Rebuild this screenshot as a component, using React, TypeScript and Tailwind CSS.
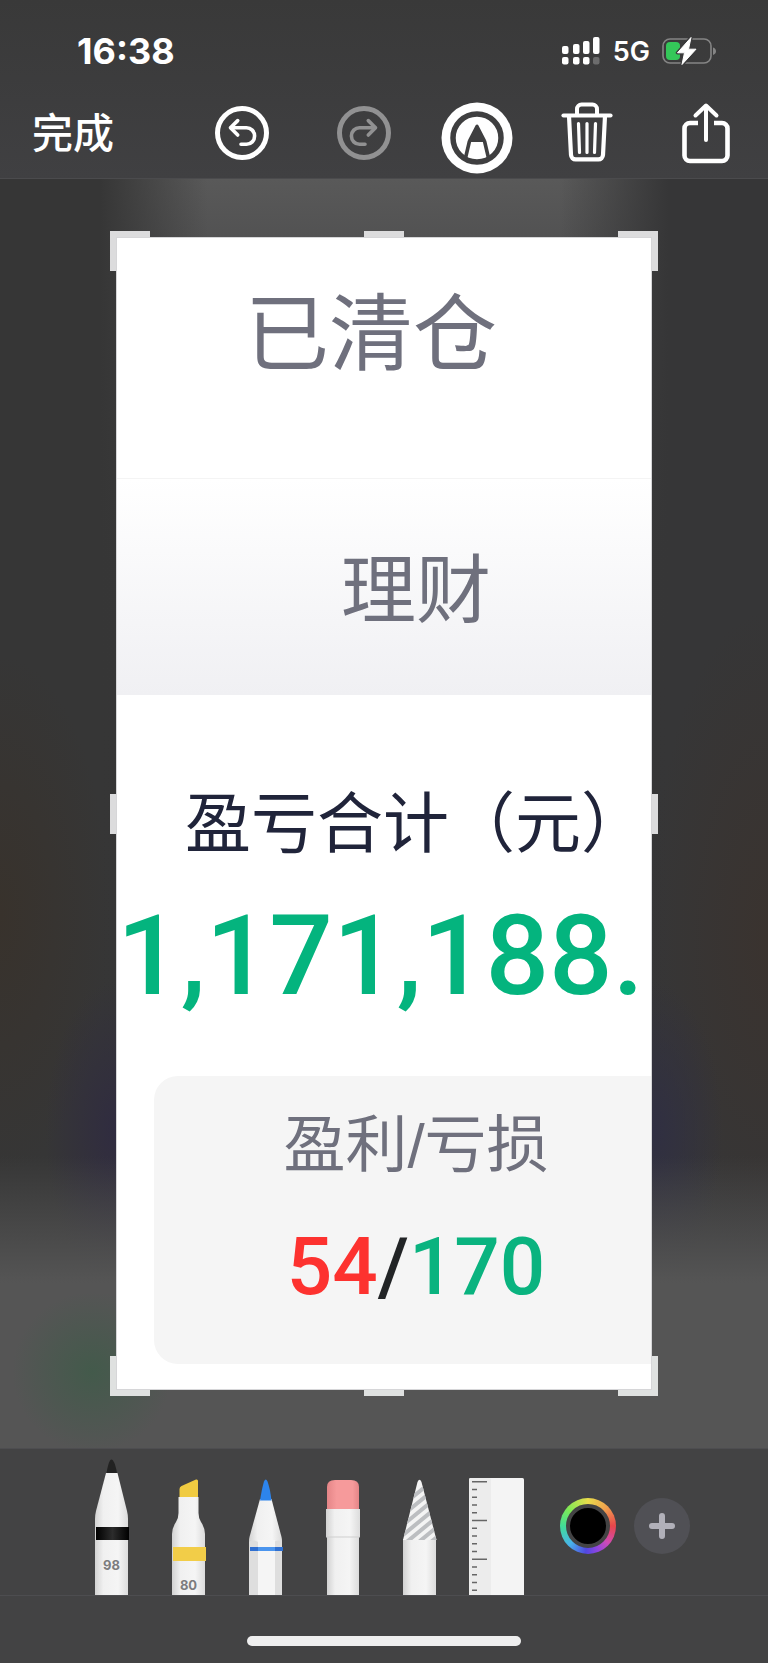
import React from 'react';

const bars = [
  { x: 0, y: 9, h: 8 },
  { x: 11, y: 7, h: 10 },
  { x: 21, y: 4, h: 13 },
  { x: 31, y: 0, h: 17 },
];

const SignalIcon = () => (
  <svg width="39" height="28" viewBox="0 0 39 28" fill="#fff">
    {bars.map((b, i) => (
      <g key={b.x}>
        <rect x={b.x} y={b.y} width="6.500" height={b.h} rx="2" />
        <rect x={b.x} y="20" width="6.500" height="7.500" rx="2" opacity={i === 3 ? 0.25 : 1} />
      </g>
    ))}
  </svg>
);

const BatteryIcon = () => (
  <svg width="55" height="28" viewBox="0 0 55 28">
    <rect x="1" y="2" width="48" height="24" rx="7" fill="none" stroke="#858585" strokeWidth="1.6" />
    <path d="M51 10.500v7.500c2-.6 3-2 3-3.700s-1-3.200-3-3.800z" fill="#858585" />
    <rect x="4" y="5" width="14" height="18" rx="4" fill="#34c759" />
    <path d="M29 .5 15.500 15.800h7L20 27.500 34 12.200h-7.500z" fill="#fff" stroke="#3b3b3c" strokeWidth="3.500" strokeLinejoin="round" />
    <path d="M29 .5 15.500 15.800h7L20 27.500 34 12.200h-7.500z" fill="#fff" stroke="#fff" strokeWidth="1" strokeLinejoin="round" />
  </svg>
);

const UndoIcon = ({ flipped = false }: { flipped?: boolean }) => (
  <svg width="54" height="54" viewBox="0 0 54 54" fill="none" stroke="currentColor" strokeLinecap="round" strokeLinejoin="round">
    <circle cx="27" cy="27" r="24.500" strokeWidth="5" />
    <g strokeWidth="3.600" transform={flipped ? 'matrix(-1 0 0 1 54 0)' : undefined}>
      <path d="M22.700 14.600 15.500 21.700l7.200 7.300" />
      <path d="M16 21.700h15.500a7.800 8 0 0 1 0 16.600H26" />
    </g>
  </svg>
);

const MarkupIcon = () => (
  <svg width="72" height="72" viewBox="0 0 72 72">
    <circle cx="36" cy="36" r="35.500" fill="#fff" />
    <circle cx="36" cy="36" r="24" fill="#fff" stroke="#3f3f40" strokeWidth="5.500" />
    <path d="M28.500 39 24.500 56M43.500 39 47.500 56" stroke="#3f3f40" strokeWidth="3.600" />
    <path d="M36 24 28.500 38.500h15z" fill="#3f3f40" stroke="#3f3f40" strokeWidth="3" strokeLinejoin="round" />
  </svg>
);

const TrashIcon = () => (
  <svg width="52" height="60" viewBox="0 0 52 60" fill="none" stroke="#fff" strokeLinecap="round" strokeLinejoin="round">
    <path d="M2.500 13.500h47" strokeWidth="4.200" />
    <path d="M16 13V7a4.500 4.500 0 0 1 4.500-4.500h11A4.500 4.500 0 0 1 36 7v6" strokeWidth="4" />
    <path d="m8 14 2 39a4.600 4.600 0 0 0 4.600 4.400h22.800A4.600 4.600 0 0 0 42 53l2-39" strokeWidth="4.200" />
    <path d="m17.500 21.500 1 29M26 21.500v29M34.500 21.500l-1 29" strokeWidth="3.200" />
  </svg>
);

const ShareIcon = () => (
  <svg width="50" height="62" viewBox="0 0 50 62" fill="none" stroke="#fff" strokeWidth="4.600" strokeLinejoin="round">
    <path d="M17 21H9a5.500 5.500 0 0 0-5.500 5.500v27A5.500 5.500 0 0 0 9 59h32a5.500 5.500 0 0 0 5.500-5.500v-27A5.500 5.500 0 0 0 41 21h-8" />
    <path d="M25 38V4M14.500 13.500 25 3.500l10.500 10" strokeWidth="4" strokeLinecap="round" />
  </svg>
);

const Shade = () => (
  <linearGradient id="shade" x1="0" x2="1" y1="0" y2="0">
    <stop offset="0" stopColor="#d2d2d2" />
    <stop offset="0.250" stopColor="#f0f0f0" />
    <stop offset="0.700" stopColor="#f5f5f5" />
    <stop offset="1" stopColor="#dcdcdc" />
  </linearGradient>
);

const PenTool = () => (
  <svg width="34" height="136" viewBox="0 0 34 136">
    <defs>
      <Shade />
      <linearGradient id="band" x1="0" x2="1" y1="0" y2="0">
        <stop offset="0" stopColor="#000" />
        <stop offset="0.500" stopColor="#2c2c2c" />
        <stop offset="1" stopColor="#000" />
      </linearGradient>
    </defs>
    <path d="M11 14h11.500L32 52q1 4 1 8v76H0V60q0-4 1-8z" fill="url(#shade)" />
    <path d="M11.500 14Q13 5 15 1.500 16.500-.6 18 1.500 20.500 5 22 14z" fill="#222" />
    <rect x="1" y="68" width="33" height="13" fill="url(#band)" />
    <text x="16.500" y="111" textAnchor="middle" className="fill-[#7c7c7e] font-['Inter'] text-[13px] font-bold">98</text>
  </svg>
);

const MarkerTool = () => (
  <svg width="34" height="116" viewBox="0 0 34 116">
    <path d="M7.500 19V10q0-2 2-3L24 .5q2-.5 2 1.500v17z" fill="#f0cb41" />
    <path d="M6.500 18H26.500V34q0 5 2.500 9 4 6 4 12v61H0V55q0-6 4-12 2.500-4 2.500-9z" fill="url(#shade)" />
    <rect x="1" y="68" width="33" height="14" fill="#f2cd48" />
    <text x="16.500" y="111" textAnchor="middle" className="fill-[#7c7c7e] font-['Inter'] text-[13px] font-bold">80</text>
  </svg>
);

const PencilTool = () => (
  <svg width="34" height="116" viewBox="0 0 34 116">
    <path d="M11 20h11.500L32.500 58q.5 2 .5 4v54H0V62q0-2 .5-4z" fill="url(#shade)" />
    <path d="M0 63q4-3 9 0h16q4-3 8 0v53H0z" fill="#dedede" />
    <path d="M9 61h17v55H9z" fill="#f5f5f5" />
    <path d="M11 21.500Q13 9 15 2.500q1.700-4 3.500 0Q21 9 22.500 21.500z" fill="#2d84ec" />
    <rect x="1" y="68" width="33" height="4" fill="#2f6fd0" />
    <rect x="9" y="68" width="17" height="4" fill="#4b95ee" />
  </svg>
);

const EraserTool = () => (
  <svg width="34" height="116" viewBox="0 0 34 116">
    <defs>
      <linearGradient id="rubber" x1="0" x2="1" y1="0" y2="0">
        <stop offset="0" stopColor="#e48587" />
        <stop offset="0.300" stopColor="#f69a9b" />
        <stop offset="0.800" stopColor="#f69a9b" />
        <stop offset="1" stopColor="#e48587" />
      </linearGradient>
    </defs>
    <path d="M1 30V8q0-7 8-7h16q8 0 8 7v22z" fill="url(#rubber)" />
    <rect x="1" y="58" width="32" height="58" fill="url(#shade)" />
    <rect x="0" y="30" width="34" height="28" fill="url(#shade)" />
    <path d="M0 58h34" stroke="#cfcfcf" />
  </svg>
);

const LassoTool = () => (
  <svg width="34" height="116" viewBox="0 0 34 116">
    <clipPath id="cone">
      <path d="M0 61 14.500 3q2-4.500 4 0L33.500 61z" />
    </clipPath>
    <rect x="0" y="60" width="33" height="56" fill="url(#shade)" />
    <g clipPath="url(#cone)">
      <rect width="34" height="61" fill="#f4f4f4" />
      <path d="M0 26 34-2M0 36 34 8M0 46 34 18M0 56 34 28M0 66 34 38M0 76 34 48M0 86 34 58" stroke="#bcbec1" strokeWidth="4" />
    </g>
  </svg>
);

const ticks = Array.from({ length: 15 }, (_, i) => i);

const RulerTool = () => (
  <svg width="55" height="117" viewBox="0 0 55 117">
    <rect width="55" height="120" rx="1.500" fill="#f4f4f4" />
    <rect width="22" height="120" rx="1.500" fill="#ececec" />
    {ticks.map((i) => (
      <rect key={i} x="3" y={3 + i * 7.75} width={i % 5 === 0 ? 15 : 5} height="1.500" fill="#666" />
    ))}
  </svg>
);

const tools = [
  { name: 'Pen', icon: <PenTool /> },
  { name: 'Marker', icon: <MarkerTool /> },
  { name: 'Pencil', icon: <PencilTool /> },
  { name: 'Eraser', icon: <EraserTool /> },
  { name: 'Lasso', icon: <LassoTool /> },
  { name: 'Ruler', icon: <RulerTool /> },
];

const StatusBar = () => (
  <div className="flex h-[102px] items-center justify-between pl-[77px] pr-[51px] font-['Inter',sans-serif] text-white">
    <span className="text-[36px] font-bold leading-none">16:38</span>
    <div className="flex items-center">
      <SignalIcon />
      <span className="ml-3 mr-3 text-[27px] font-semibold leading-none">5G</span>
      <BatteryIcon />
    </div>
  </div>
);

const Toolbar = () => (
  <nav className="grid h-[76px] grid-cols-[183fr_118fr_126fr_99fr_122fr_116fr] items-start justify-items-center pr-1 text-white">
    <button className="justify-self-start pl-8 pt-2 font-['Noto_Sans_CJK_SC',sans-serif] text-[41px] font-medium leading-none">完成</button>
    <button aria-label="Undo" className="pt-1"><UndoIcon /></button>
    <button aria-label="Redo" disabled className="pt-1 text-[#919192]"><UndoIcon flipped /></button>
    <button aria-label="Markup"><MarkupIcon /></button>
    <button aria-label="Delete"><TrashIcon /></button>
    <button aria-label="Share"><ShareIcon /></button>
  </nav>
);

// crop handles sit on the rim of the picture, behind it
const CropHandles = () => (
  <>
    <span className="absolute left-0 top-0 h-10 w-10 bg-[#dcdcdd]" />
    <span className="absolute right-0 top-0 h-10 w-10 bg-[#dcdcdd]" />
    <span className="absolute bottom-0 left-0 h-10 w-10 bg-[#dfe1e0]" />
    <span className="absolute bottom-0 right-0 h-10 w-10 bg-[#dfe1e0]" />
    <span className="absolute left-1/2 top-0 h-10 w-10 -translate-x-1/2 bg-[#dcdcdd]" />
    <span className="absolute bottom-0 left-1/2 h-10 w-10 -translate-x-1/2 bg-[#dfe1e0]" />
    <span className="absolute left-0 top-1/2 h-10 w-10 -translate-y-1/2 bg-[#dcdcdd]" />
    <span className="absolute right-0 top-1/2 h-10 w-10 -translate-y-1/2 bg-[#dcdcdd]" />
  </>
);

const Picture = () => (
  <div className="relative overflow-hidden border border-[#d6d6d8] bg-white text-center font-['Liberation_Sans','Noto_Sans_CJK_SC',sans-serif] text-[#6f707d]">
    <div className="border-b border-[#f4f4f4] pb-[101px] pr-[26px] pt-[55px] text-[84px] leading-[84px]">已清仓</div>
    <div className="bg-gradient-to-b from-white to-[#f0f0f3] pb-[66px] pl-16 pt-[75px] text-[75px] leading-[75px]">理财</div>
    <div className="-mr-16 pb-[25px] pt-[96px]">
      <div className="whitespace-nowrap text-[66px] leading-[66px] text-[#20243a]">盈亏合计（元）</div>
      <div className="mt-[43px] whitespace-nowrap text-left font-['Roboto',sans-serif] text-[112px] font-medium leading-[112px] text-[#04b47e]">
        1,171,188.
      </div>
      <div className="mx-[37px] mt-[64px] rounded-3xl bg-[#f5f5f5] pb-[57px] pt-[39px]">
        <div className="text-[62px] leading-[62px]">盈利/亏损</div>
        <div className="mt-[50px] font-['Roboto',sans-serif] text-[80px] font-medium leading-[80px]">
          <span className="text-[#fd322f]">54</span>
          <span className="text-[#222426]">/</span>
          <span className="text-[#0ab37f]">170</span>
        </div>
      </div>
    </div>
  </div>
);

const Dock = () => (
  <footer className="bg-[#434344]">
    <div className="flex h-[148px] items-center justify-center border-b border-t border-b-[#4d4d50] border-t-[#4d4d50] pr-[5px]">
      <div className="flex items-end self-stretch">
        {tools.map((tool) => (
          <button key={tool.name} aria-label={tool.name} className="flex w-[77px] justify-center">
            {tool.icon}
          </button>
        ))}
      </div>
      <div className="ml-[25px] flex gap-[18px] pt-2">
        <button
          aria-label="Color"
          className="h-14 w-14 rounded-full bg-[conic-gradient(#e9dc4b,#f0a04e_45deg,#e8464b_90deg,#d04bb5_130deg,#8a45e0_160deg,#5148e0_185deg,#48b4ea_225deg,#42dd98_270deg,#7ee955_310deg,#e9dc4b)] p-[6px]"
        >
          <span className="block h-full w-full rounded-full border-4 border-[#434344] bg-black" />
        </button>
        <button aria-label="Add" className="flex h-14 w-14 items-center justify-center rounded-full bg-[#505055]">
          <svg width="26" height="26" viewBox="0 0 26 26" stroke="#b1b0b9" strokeWidth="6" strokeLinecap="round">
            <path d="M13 3v20M3 13h20" />
          </svg>
        </button>
      </div>
    </div>
    <div className="flex h-[67px] items-center justify-center pt-[23px]">
      <span className="h-[10px] w-[274px] rounded-full bg-[#efefef]" />
    </div>
  </footer>
);

const App: React.FC = () => {
  return (
    <div className="flex min-h-screen flex-col bg-[#363636]">
      <header className="border-b border-[#4b4b4d] bg-gradient-to-b from-[#393939] to-[#404042]">
        <StatusBar />
        <Toolbar />
      </header>
      <main className="flex-1 bg-[radial-gradient(ellipse_80px_80px_at_12%_94%,#435a4b,#435a4b00),linear-gradient(to_bottom,#55555500_77%,#555555_87%),radial-gradient(ellipse_70px_150px_at_15%_75%,#302c40,#302c4000),radial-gradient(ellipse_70px_150px_at_85%_75%,#302f42,#302f4200),radial-gradient(ellipse_110px_260px_at_0%_58%,#38322c,#38322c00),radial-gradient(ellipse_120px_330px_at_100%_60%,#3a332f,#3a332f00),linear-gradient(to_right,#363636_13%,#57575800_27%,#57575800_73%,#363637_87%),linear-gradient(to_bottom,#595959,#4a4a4b_10%,#383838_30%,#353435_50%,#353435)] px-[110px] pb-[51px] pt-[52px]">
        <div className="relative p-[6px]">
          <CropHandles />
          <Picture />
        </div>
      </main>
      <Dock />
    </div>
  );
};

export default App;
